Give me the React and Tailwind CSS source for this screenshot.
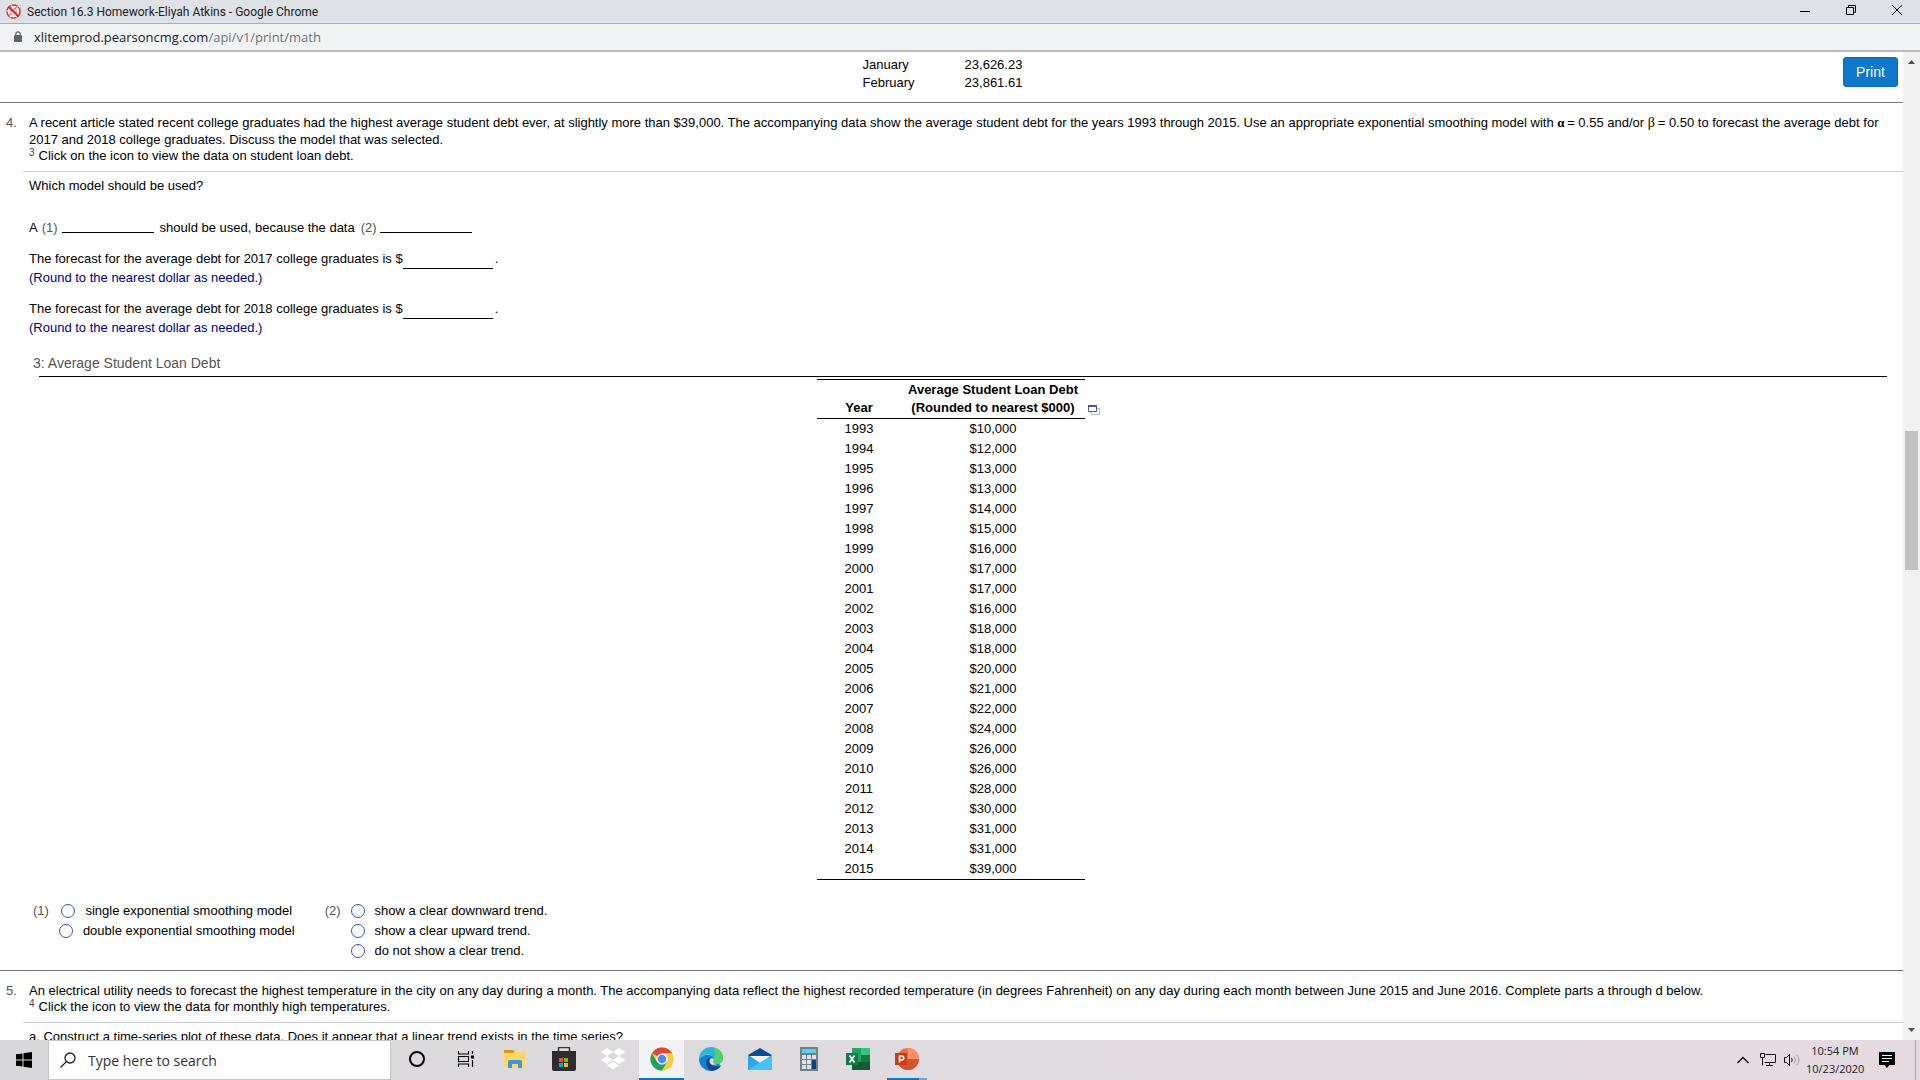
import React from "react";

const loanDebt = [
  [1993, "$10,000"],
  [1994, "$12,000"],
  [1995, "$13,000"],
  [1996, "$13,000"],
  [1997, "$14,000"],
  [1998, "$15,000"],
  [1999, "$16,000"],
  [2000, "$17,000"],
  [2001, "$17,000"],
  [2002, "$16,000"],
  [2003, "$18,000"],
  [2004, "$18,000"],
  [2005, "$20,000"],
  [2006, "$21,000"],
  [2007, "$22,000"],
  [2008, "$24,000"],
  [2009, "$26,000"],
  [2010, "$26,000"],
  [2011, "$28,000"],
  [2012, "$30,000"],
  [2013, "$31,000"],
  [2014, "$31,000"],
  [2015, "$39,000"],
];

function TitleBar() {
  return (
    <header className="flex h-6 shrink-0 items-center border-b border-[#a9abae] bg-[#dee1e6] pl-1.5 text-[12px] text-[#202124]">
      <svg className="mr-1.5 h-[15px] w-[15px] shrink-0" viewBox="0 0 15 15" aria-hidden="true">
        <circle cx="7.5" cy="7.5" r="6.500" fill="#fff" stroke="#e8262a" strokeWidth="1.500" strokeDasharray="6 1" />
        <path d="M5 3.500v6.500l-1.500 1M7 6l4-3M10 3.500v6l2 1.500" fill="none" stroke="#ee6a6d" strokeWidth="1.200" />
        <path d="M2.500 2.500l10 10" stroke="#e8262a" strokeWidth="2.200" />
      </svg>
      <h1 className="flex-1 font-[Roboto,sans-serif]">Section 16.3 Homework-Eliyah Atkins - Google Chrome</h1>
      <button className="flex h-full w-[46px] items-center justify-center" aria-label="Minimize">
        <svg className="h-[10px] w-[10px]" viewBox="0 0 10 10"><path d="M0 4.500h10" stroke="#000" /></svg>
      </button>
      <button className="flex h-full w-[46px] items-center justify-center pb-1" aria-label="Restore">
        <svg className="h-[10px] w-[10px]" viewBox="0 0 10 10" fill="none" stroke="#000">
          <path d="M.5 2.500h7v7h-7zM2.500 2.500v-2h7v7h-2" />
        </svg>
      </button>
      <button className="flex h-full w-[46px] items-center justify-center pb-1" aria-label="Close">
        <svg className="h-[10px] w-[10px]" viewBox="0 0 10 10"><path d="M0 0l10 10M10 0L0 10" stroke="#000" /></svg>
      </button>
    </header>
  );
}

function AddressBar() {
  return (
    <div className="flex h-7 shrink-0 items-center border-b-2 border-[#b9bbbe] bg-[#f1f3f4] pt-0.5 pl-3.5 text-[13px] text-[#202124]">
      <svg className="mr-3 mb-0.5 h-[12px] w-2 shrink-0" viewBox="0 0 8 12" aria-hidden="true">
        <rect y="4" width="8" height="7" rx="1" fill="#5f6368" />
        <path d="M1.800 5V3a2.200 2.200 0 014.400 0v2" fill="none" stroke="#5f6368" strokeWidth="1.200" />
      </svg>
      <span>
        xlitemprod.pearsoncmg.com<span className="text-[#6f7377]">/api/v1/print/math</span>
      </span>
    </div>
  );
}

function Choice({ name, children }) {
  return (
    <label className="flex h-5 items-center gap-2.5">
      <input
        type="radio"
        name={name}
        className="h-[14px] w-[14px] appearance-none rounded-full border border-[#3451c4] bg-white"
      />
      {children}
    </label>
  );
}

function Forecast({ year }) {
  return (
    <div className="mb-3">
      <label className="flex h-[19px] items-center">
        The forecast for the average debt for {year} college graduates is $
        <input type="text" className="mr-0.5 h-5 w-[90px] border-b border-black outline-none" />.
      </label>
      <p className="leading-[19px] text-[#000080]">(Round to the nearest dollar as needed.)</p>
    </div>
  );
}

function DebtTable() {
  return (
    <div className="mt-0.5 flex justify-center pl-3.5">
      <div className="flex">
        <table className="w-[268px] border-collapse border-y border-black text-center">
          <thead>
            <tr className="border-b border-black leading-[18px]">
              <th className="w-[84px] pb-px align-bottom">Year</th>
              <th className="pt-px pb-px">
                Average Student Loan Debt
                <br />
                (Rounded to nearest $000)
              </th>
            </tr>
          </thead>
          <tbody>
            {loanDebt.map(([year, debt]) => (
              <tr key={year} className="h-5 leading-5">
                <td>{year}</td>
                <td>{debt}</td>
              </tr>
            ))}
          </tbody>
        </table>
        <button className="mt-[26px] ml-[3px] h-3 w-3" aria-label="Copy table">
          <svg className="h-3 w-3" viewBox="0 0 12 12" fill="none">
            <path d="M3.500 3.500h8v6h-8z" stroke="#b4b8dc" />
            <path d="M.5.5h8v6h-8z" fill="#fff" stroke="#4a58a8" />
            <path d="M0 1h9" stroke="#4a58a8" strokeWidth="2" />
          </svg>
        </button>
      </div>
    </div>
  );
}

function Question({ number, children, footnote, footnoteText }) {
  return (
    <div className="flex pt-[11px] leading-[17px]">
      <span className="w-[29px] shrink-0 pl-1.5 text-[#555]">{number}.</span>
      <div className="flex-1 pr-5">
        <p>{children}</p>
        <p className="flex h-[15px] items-center leading-[15px]">
          <span className="mr-1 mb-1.5 text-[10px] leading-none text-[#444]">{footnote}</span>
          {footnoteText}
        </p>
      </div>
    </div>
  );
}

function Worksheet() {
  return (
    <main className="min-w-0 flex-1 overflow-hidden bg-white font-['Liberation_Sans',Arial,sans-serif] text-[13px] text-black">
      <div className="flex h-[51px] items-start border-b border-[#777]">
        <div className="flex flex-1 justify-center pt-1 pl-[42px]">
          <table className="leading-[18px]">
            <tbody>
              <tr>
                <td className="w-[102px]">January</td>
                <td>23,626.23</td>
              </tr>
              <tr>
                <td>February</td>
                <td>23,861.61</td>
              </tr>
            </tbody>
          </table>
        </div>
        <button className="mt-[5px] mr-[5px] h-[30px] w-[55px] rounded-[3px] border border-[#1369b0] bg-[#0f78cb] text-[14px] text-white">
          Print
        </button>
      </div>

      <Question number={4} footnote={3} footnoteText="Click on the icon to view the data on student loan debt.">
        A recent article stated recent college graduates had the highest average student debt ever, at slightly more than
        $39,000. The accompanying data show the average student debt for the years 1993 through 2015. Use an
        appropriate exponential smoothing model with{" "}
        <span className="font-['Liberation_Serif',serif] font-bold">α&thinsp;</span>= 0.55 and/or{" "}
        <span className="font-['Liberation_Serif',serif] text-[14px]">β&thinsp;</span>= 0.50 to forecast the average debt
        for 2017 and 2018 college graduates. Discuss the model that was selected.
      </Question>

      <div className="mt-2 ml-[23px] border-t border-[#c6cad4] pt-1 pl-1.5">
        <p className="leading-5">Which model should be used?</p>
        <p className="mt-[22px] mb-[11px] flex h-5 items-center">
          A<span className="mx-1 text-[#555]">(1)</span>
          <input type="text" aria-label="Blank 1" className="mr-1.5 h-2.5 w-[92px] border-b border-black outline-none" />
          should be used, because the data
          <span className="mr-[3px] ml-1.5 text-[#555]">(2)</span>
          <input type="text" aria-label="Blank 2" className="h-2.5 w-[92px] border-b border-black outline-none" />
        </p>
        <Forecast year={2017} />
        <Forecast year={2018} />
      </div>

      <h2 className="mt-4 ml-[33px] h-[23px] text-[14px] leading-5 text-[#555]">3: Average Student Loan Debt</h2>
      <div className="mr-4 ml-[39px] border-t border-black" />
      <DebtTable />

      <div className="mt-[21px] ml-[33px] flex h-[69px] gap-[30px]">
        <div role="radiogroup" aria-label="Blank 1" className="flex">
          <span className="mr-2.5 leading-5 text-[#555]">(1)</span>
          <div className="flex flex-col items-center">
            <Choice name="model">single exponential smoothing model</Choice>
            <Choice name="model">double exponential smoothing model</Choice>
          </div>
        </div>
        <div role="radiogroup" aria-label="Blank 2" className="flex">
          <span className="mr-2.5 leading-5 text-[#555]">(2)</span>
          <div>
            <Choice name="trend">show a clear downward trend.</Choice>
            <Choice name="trend">show a clear upward trend.</Choice>
            <Choice name="trend">do not show a clear trend.</Choice>
          </div>
        </div>
      </div>
      <div className="border-t border-[#777]" />

      <Question number={5} footnote={4} footnoteText="Click the icon to view the data for monthly high temperatures.">
        An electrical utility needs to forecast the highest temperature in the city on any day during a month. The
        accompanying data reflect the highest recorded temperature (in degrees Fahrenheit) on any day during each month
        between June 2015 and June 2016. Complete parts a through d below.
      </Question>
      <div className="mt-2 ml-[23px] border-t border-[#c6cad4] pt-1 pl-1.5">
        <p className="leading-5">
          a. Construct a time-series plot of these data. Does it appear that a linear trend exists in the time series?
        </p>
      </div>
    </main>
  );
}

function ScrollBar() {
  return (
    <div className="flex w-[17px] shrink-0 flex-col items-center bg-[#f1f1f1]">
      <svg className="mt-1.5 h-2 w-[7px]" viewBox="0 0 7 8" aria-hidden="true"><path d="M0 6h7L3.500 2z" fill="#505050" /></svg>
      <div className="flex w-full flex-1 flex-col">
        <div className="grow-[365]" />
        <div className="mx-0.5 grow-[139] bg-[#c1c1c1]" />
        <div className="grow-[456]" />
      </div>
      <svg className="mb-1.5 h-2 w-[7px]" viewBox="0 0 7 8" aria-hidden="true"><path d="M0 2h7L3.500 6z" fill="#505050" /></svg>
    </div>
  );
}

const apps = [
  {
    name: "Cortana",
    icon: <circle cx="12" cy="12" r="7" fill="none" stroke="#000" strokeWidth="2" />,
  },
  {
    name: "Task View",
    icon: (
      <g fill="none" stroke="#000" strokeWidth="1.200">
        <path d="M4.500 4v3h10V4M4.500 20v-3h10v3M4.500 9.500h10v5h-10zM18.500 4v3M18.500 13v7" />
        <path d="M17 8.500h3v3h-3z" fill="#000" stroke="none" />
      </g>
    ),
  },
  {
    name: "File Explorer",
    icon: (
      <g>
        <path d="M1 3h9l2 2v3H1z" fill="#d99a10" />
        <path d="M1 6h9l2-1h10v15H1z" fill="#ffd768" />
        <path d="M5 21v-6q0-2 2-2h10q2 0 2 2v6h-4v-4H9v4z" fill="#3d96dc" />
      </g>
    ),
  },
  {
    name: "Microsoft Store",
    icon: (
      <g>
        <path d="M6.500 6V1.500q0-1 1-1h9q1 0 1 1V6" fill="none" stroke="#333" strokeWidth="1.500" />
        <path d="M0 4h24v18q0 2-2 2H2q-2 0-2-2z" fill="#2d2d2d" />
        <path d="M7 11h4v4H7z" fill="#f25022" />
        <path d="M12 11h4v4h-4z" fill="#7fba00" />
        <path d="M7 16h4v4H7z" fill="#00a4ef" />
        <path d="M12 16h4v4h-4z" fill="#ffb900" />
      </g>
    ),
  },
  {
    name: "Dropbox",
    icon: (
      <path
        d="M6 1l6 4-6 4-6-4zM18 1l6 4-6 4-6-4zM6 9l6 4-6 4-6-4zM18 9l6 4-6 4-6-4zM12 14.500l6 4-6 4-6-4z"
        fill="#fff"
      />
    ),
  },
  {
    name: "Google Chrome",
    active: true,
    icon: (
      <g>
        <circle cx="12" cy="12" r="11.500" fill="#ffcd40" />
        <path d="M12 12L2 6.250A11.500 11.500 0 0122 6.250H12z" fill="#dd4b3e" />
        <path d="M2 6.250A11.500 11.500 0 0012 23.500l5-8.600-5-2.900-5 2.900z" fill="#1da462" />
        <circle cx="12" cy="12" r="5.500" fill="#fff" />
        <circle cx="12" cy="12" r="4.300" fill="#4c8bf5" />
      </g>
    ),
  },
  {
    name: "Microsoft Edge",
    icon: (
      <g>
        <path d="M0 12a12 12 0 0121 8q-4 4-9 4A12 12 0 010 12z" fill="#1480d0" />
        <path d="M0 11C1 4 6 0 12 0c7 0 12 5 12 11 0 4-3 6-6 6-4 0-4.500-1.500-3.500-3C16 11 13 7.500 9 7.500 4 7.500 1 10 0 14z" fill="#2bb5dc" />
        <path d="M14 .2C21 2 24 6 24 11c0 4-3 6-6 6-4 0-4.500-1.500-3.500-3 1.500-3 3-9-.5-13.800z" fill="#52d06a" />
        <path d="M9 11c-4 5-1 13 5 12.800 4-.5 7-3 8.300-5.800-4 2.500-9 2-11.300-1.500C9.500 14 10 12.500 11 11.500z" fill="#15478f" />
        <path d="M11 16c-1-2.500 0-4.500 2-5 2 .8 2.300 2 1.500 3-1 1.500-.5 3 3.500 3-3 1.500-5.500 1-7-1z" fill="#dddce0" />
      </g>
    ),
  },
  {
    name: "Mail",
    icon: (
      <g>
        <path d="M0 8l12-7 12 7v8H0z" fill="#0a4d92" />
        <path d="M2 9h20l-10 8z" fill="#f5f5f5" />
        <path d="M0 8l12 7 12-7v15H0z" fill="#2aa8ec" />
        <path d="M2 9h20l-8 6-2 1z" fill="#f5f5f5" />
        <path d="M0 23L24 8v15z" fill="#46c0f6" />
      </g>
    ),
  },
  {
    name: "Calculator",
    icon: (
      <g>
        <path d="M3 0h18v24H3z" fill="#74808a" />
        <path d="M5 2h14v4H5z" fill="#4fd5f7" />
        <path d="M5 8h4v4H5zM10 8h4v4h-4zM15 8h4v4h-4zM5 13h4v4H5zM10 13h4v4h-4zM5 18h4v4H5zM10 18h4v4h-4z" fill="#dfe3e6" />
        <path d="M15 13h4v9h-4z" fill="#12427c" />
      </g>
    ),
  },
  {
    name: "Excel",
    icon: (
      <g>
        <path d="M6 1h9v22H6z" fill="#21a366" />
        <path d="M15 1h9v7h-9z" fill="#33c481" />
        <path d="M15 8h9v7h-9z" fill="#107c41" />
        <path d="M6 15h18v8H6z" fill="#185c37" />
        <path d="M0 6h12v12H0z" fill="#107c41" />
        <path d="M3.500 8.500l5 7M8.500 8.500l-5 7" stroke="#fff" strokeWidth="1.800" />
      </g>
    ),
  },
  {
    name: "PowerPoint",
    running: true,
    icon: (
      <g>
        <circle cx="13" cy="12" r="11" fill="#ed6c47" />
        <path d="M13 1a11 11 0 0111 11H13z" fill="#ff8f6b" />
        <path d="M2 12h22a11 11 0 01-22 0z" fill="#d35230" />
        <path d="M0 6h12v12H0z" fill="#c43e1c" />
        <path d="M4.500 15.500V9h2.200a2 2 0 010 4H4.500" fill="none" stroke="#fff" strokeWidth="1.600" />
      </g>
    ),
  },
];

function AppButton({ app }) {
  return (
    <button
      aria-label={app.name}
      className={`mx-0.5 flex h-10 w-[45px] flex-col items-center ${app.active ? "bg-[#f3f2f4]" : ""}`}
    >
      <span className="flex flex-1 items-center">
        <svg className="h-6 w-6" viewBox="0 0 24 24">
          {app.icon}
        </svg>
      </span>
      {app.active && <span className="h-0.5 w-full bg-[#0078d7]" />}
      {app.running && <span className="h-0.5 w-10 border-r-8 border-[#66a9e0] bg-[#0078d7]" />}
      {!app.active && !app.running && <span className="h-0.5" />}
    </button>
  );
}

function Taskbar() {
  return (
    <footer className="flex h-10 shrink-0 items-center bg-linear-to-r from-[#d8d8da] via-[#e0dce0] to-[#e6dae1] text-[#1a1a1a]">
      <button className="flex h-full w-12 items-center justify-center" aria-label="Start">
        <svg className="h-4 w-4" viewBox="0 0 16 16">
          <path d="M0 2.300l6.500-.9v6.100H0zM7.500 1.300L16 0v7.500H7.500zM0 8.500h6.500v6.100L0 13.700zM7.500 8.500H16V16l-8.500-1.200z" />
        </svg>
      </button>
      <label className="flex h-full w-[343px] items-center border border-[#c4c4c6] bg-white pl-[11px]">
        <svg className="mr-3 h-4 w-4" viewBox="0 0 16 16" fill="none" stroke="#222" strokeWidth="1.300">
          <circle cx="10" cy="6" r="5" />
          <path d="M6.500 9.500L.5 15.500" />
        </svg>
        <input
          type="text"
          aria-label="Search"
          placeholder="Type here to search"
          className="w-64 text-[14px] outline-none placeholder:text-[#333]"
        />
      </label>
      <nav className="ml-px flex">
        {apps.map((app) => (
          <AppButton key={app.name} app={app} />
        ))}
      </nav>
      <div className="ml-auto flex h-full items-center">
        <svg className="mr-[11px] h-3 w-3" viewBox="0 0 12 12" fill="none" stroke="#111" strokeWidth="1.300">
          <path d="M.5 9L6 3.500 11.500 9" />
        </svg>
        <svg className="mr-2 h-4 w-4" viewBox="0 0 16 16" fill="none" stroke="#111">
          <path d="M5.500 2.500h10v8h-11M.5 1.500h4v4h-4zM2.500 5.500v8M9.500 10.500v3M6 13.500h7" />
        </svg>
        <svg className="mr-1.5 h-4 w-4" viewBox="0 0 16 16" fill="none" stroke="#111">
          <path d="M.5 5.500h2l3-3v11l-3-3h-2zM7.500 6q1.500 2 0 4" />
          <path d="M10 4.500q3 3.500 0 7M12.500 2.500q5 5.500 0 11" stroke="#999" />
        </svg>
        <div className="w-[58px] text-center text-[11px] leading-[18px] whitespace-nowrap">
          <p>10:54 PM</p>
          <p>10/23/2020</p>
        </div>
        <button className="mx-[15px] h-4 w-4" aria-label="Notifications">
          <svg className="h-4 w-4" viewBox="0 0 16 16">
            <path d="M0 0h16v13h-5.500L8 16l-2.500-3H0z" />
            <path d="M3 3.500h10M3 6.500h10M3 9.500h7" stroke="#fff" />
          </svg>
        </button>
        <div className="mr-1 ml-[5px] h-full border-l border-[#b5adb2]" />
      </div>
    </footer>
  );
}

export default function App() {
  return (
    <div className="flex h-screen flex-col overflow-hidden font-['Open_Sans','Noto_Sans',sans-serif]">
      <TitleBar />
      <AddressBar />
      <div className="flex min-h-0 flex-1">
        <Worksheet />
        <ScrollBar />
      </div>
      <Taskbar />
    </div>
  );
}
